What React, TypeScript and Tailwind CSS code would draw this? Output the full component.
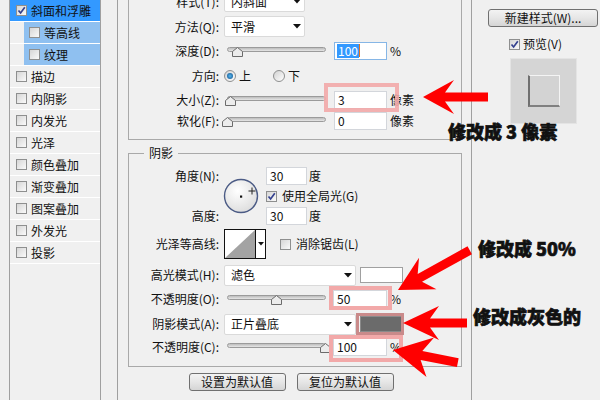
import React from 'react';

// small building blocks of the old Win7-style layer style dialog

const Check = ({ checked = false }: { checked?: boolean }) => (
  <span className="relative inline-flex w-[11px] h-[11px] shrink-0 border border-[#8e8f8f] bg-linear-to-br from-[#d6d6d6] to-[#fafafa]">
    {checked && (
      <svg className="absolute left-0 top-0" width="9" height="9" viewBox="0 0 9 9">
        <path d="M1.5 4.5 L3.6 7 L7.8 1.3" fill="none" stroke="#34418f" strokeWidth="1.7" />
      </svg>
    )}
  </span>
);

const Radio = ({ on = false }: { on?: boolean }) => (
  <span className="inline-flex w-[12px] h-[12px] shrink-0 rounded-full border border-[#8e8f8f] bg-linear-to-br from-[#d2d2d2] to-white items-center justify-center">
    {on && <span className="w-[6px] h-[6px] rounded-full bg-radial from-[#58b8ee] to-[#0c4f8c]" />}
  </span>
);

const Caret = () => (
  <svg width="8" height="5" viewBox="0 0 8 5">
    <path d="M0 0 H8 L4 4.5 Z" fill="#111" />
  </svg>
);

const Select = ({ value, className }: { value: string; className: string }) => (
  <div className={`h-[21px] bg-white border border-[#dadada] rounded-[2px] flex items-center justify-between pl-[6px] pr-[3px] ${className}`}>
    <span>{value}</span>
    <Caret />
  </div>
);

const Field = ({ value, className = 'w-[53px]', focus = false }: { value: string; className?: string; focus?: boolean }) => (
  <div className={`h-[18px] bg-white border flex items-center pl-[2px] ${focus ? 'border-[#86b6e6]' : 'border-[#d3d6db]'} ${className}`}>
    {focus ? (
      <>
        <span className="bg-[#3399ff] text-white leading-[14px] px-[1px]">{value}</span>
        <span className="w-[1px] h-[13px] bg-[#e07020]" />
      </>
    ) : (
      <span className="px-[1px]">{value}</span>
    )}
  </div>
);

const Slider = ({ pos }: { pos: number }) => (
  <div className="relative w-[106px] h-[12px] shrink-0">
    <div className="absolute left-[3px] w-[99px] top-[2px] h-[5px] rounded-full border border-[#9b9b9b] bg-linear-to-b from-[#bdbdbd] to-[#e6e6e6]" />
    <svg className="absolute top-[2px]" style={{ left: 3 + pos - 5.5 }} width="11" height="10" viewBox="0 0 11 10">
      <path d="M5.5 0.5 L10.5 4.5 V9.5 H0.5 V4.5 Z" fill="#ececec" stroke="#6b6b6b" />
    </svg>
  </div>
);

const Row = ({ label, className, children }: { label: string; className: string; children?: React.ReactNode }) => (
  <div className={`flex items-center ${className}`}>
    <div className="w-[90px] shrink-0 text-right">{label}</div>
    <div className="ml-[5px] flex items-center">{children}</div>
  </div>
);

const Button = ({ children, className }: { children: React.ReactNode; className: string }) => (
  <div className={`h-[18px] flex items-center justify-center rounded-[3px] border border-[#707070] bg-linear-to-b from-[#f3f3f3] via-[#e6e6e6] to-[#d5d5d5] ${className}`}>
    {children}
  </div>
);

const sideItems = ['描边', '内阴影', '内发光', '光泽', '颜色叠加', '渐变叠加', '图案叠加', '外发光', '投影'];

const Sidebar = () => (
  <div className="ml-[9px] w-[92px] h-full shrink-0 border-x border-[#a0a0a0] bg-[#f0f0f0]">
    <div className="h-[22px] border-b border-white bg-[#3399ff] flex items-center pl-[6px] gap-[4px]">
      <Check checked />
      <span>斜面和浮雕</span>
    </div>
    {['等高线', '纹理'].map((t) => (
      <div key={t} className="h-[22px] border-b border-white flex">
        <div className="w-[14px]" />
        <div className="flex-1 bg-[#8fc0f0] flex items-center pl-[5px] gap-[4px]">
          <Check />
          <span>{t}</span>
        </div>
      </div>
    ))}
    {sideItems.map((t) => (
      <div key={t} className="h-[22px] border-b border-white flex items-center pl-[6px] gap-[4px]">
        <Check />
        <span>{t}</span>
      </div>
    ))}
  </div>
);

const AngleDial = () => (
  <svg width="36" height="36" viewBox="0 0 36 36">
    <defs>
      <radialGradient id="dial" cx="40%" cy="35%" r="70%">
        <stop offset="0%" stopColor="#ffffff" />
        <stop offset="100%" stopColor="#dcdcdc" />
      </radialGradient>
    </defs>
    <circle cx="18" cy="18" r="16.5" fill="url(#dial)" stroke="#4b5b85" strokeWidth="1.4" />
    <rect x="17" y="17.5" width="2.2" height="2.2" fill="#111" />
    <path d="M29 9.5 V16.5 M25.5 13 H32.5" stroke="#222" strokeWidth="1" />
  </svg>
);

const Contour = () => (
  <div className="w-[42px] h-[30px] border border-[#111] bg-white flex">
    <svg width="30" height="28" viewBox="0 0 30 28">
      <path d="M0 28 L30 0 V28 Z" fill="#a3a3a3" />
    </svg>
    <div className="flex-1 border-l border-[#111] flex items-center justify-center">
      <svg width="6" height="4" viewBox="0 0 6 4">
        <path d="M0 0 H6 L3 3.5 Z" fill="#111" />
      </svg>
    </div>
  </div>
);

const BevelGroup = () => (
  <div className="ml-[10px] w-[334px] border-x border-b border-[#a9a9a9] pb-[8px]">
    <div className="-mt-[11px]">
      <Row label="样式(T):" className="h-[25px]">
        <Select value="内斜面" className="w-[81px]" />
      </Row>
      <Row label="方法(Q):" className="h-[25px]">
        <Select value="平滑" className="w-[81px]" />
      </Row>
      <Row label="深度(D):" className="h-[23px]">
        <Slider pos={10} />
        <Field value="100" focus className="ml-[4px] w-[53px]" />
        <span className="ml-[3px]">%</span>
      </Row>
      <Row label="方向:" className="h-[28px]">
        <Radio on />
        <span className="ml-[3px]">上</span>
        <span className="ml-[22px] flex"><Radio /></span>
        <span className="ml-[3px]">下</span>
      </Row>
      <Row label="大小(Z):" className="h-[20px]">
        <Slider pos={3.5} />
        <Field value="3" className="ml-[4px] w-[53px]" />
        <span className="ml-[3px]">像素</span>
      </Row>
      <Row label="软化(F):" className="h-[21px]">
        <Slider pos={0.7} />
        <Field value="0" className="ml-[4px] w-[53px]" />
        <span className="ml-[3px]">像素</span>
      </Row>
    </div>
  </div>
);

const ShadowGroup = () => (
  <div className="relative ml-[10px] mt-[13px] w-[334px] border border-[#a9a9a9] pt-[12px] pb-[10px]">
    <span className="absolute -top-[9px] left-[15px] px-[5px] bg-[#f0f0f0] leading-[16px]">阴影</span>
    <div className="flex h-[60px]">
      <div className="w-[90px] shrink-0 flex flex-col text-right">
        <div className="h-[20px] leading-[20px]">角度(N):</div>
        <div className="h-[20px]" />
        <div className="h-[20px] leading-[20px]">高度:</div>
      </div>
      <div className="ml-[4px] w-[36px] flex items-center">
        <AngleDial />
      </div>
      <div className="ml-[7px] flex flex-col">
        <div className="h-[20px] flex items-center">
          <Field value="30" className="w-[41px] h-[17px]" />
          <span className="ml-[2px]">度</span>
        </div>
        <div className="h-[20px] flex items-center">
          <Check checked />
          <span className="ml-[5px]">使用全局光(G)</span>
        </div>
        <div className="h-[20px] flex items-center">
          <Field value="30" className="w-[41px] h-[17px]" />
          <span className="ml-[2px]">度</span>
        </div>
      </div>
    </div>
    <Row label="光泽等高线:" className="h-[36px]">
      <Contour />
      <span className="ml-[14px] flex"><Check /></span>
      <span className="ml-[5px]">消除锯齿(L)</span>
    </Row>
    <Row label="高光模式(H):" className="h-[26px]">
      <Select value="滤色" className="w-[132px]" />
      <div className="ml-[4px] w-[43px] h-[16px] bg-white border border-[#a0a0a0]" />
    </Row>
    <Row label="不透明度(O):" className="h-[22px]">
      <Slider pos={49.7} />
      <Field value="50" className="ml-[3px] w-[54px]" />
      <span className="ml-[3px]">%</span>
    </Row>
    <Row label="阴影模式(A):" className="h-[28px]">
      <Select value="正片叠底" className="w-[132px]" />
      <div className="ml-[4px] w-[43px] h-[16px] bg-[#6b6b6b] border border-[#8a8a8a]" />
    </Row>
    <Row label="不透明度(C):" className="h-[18px]">
      <Slider pos={98.3} />
      <Field value="100" className="ml-[3px] w-[54px]" />
      <span className="ml-[3px]">%</span>
    </Row>
  </div>
);

const RightPanel = () => (
  <div className="flex-1 pl-[16px] pt-[9px]">
    <Button className="w-[110px]">新建样式(W)...</Button>
    <div className="mt-[11px] ml-[21px] h-[12px] flex items-center">
      <Check checked />
      <span className="ml-[3px]">预览(V)</span>
    </div>
    <div className="mt-[8px] ml-[22px] w-[67px] h-[66px] border border-[#e4e4e4] bg-[#d5d5d5] flex items-center justify-center">
      <div className="w-[32px] h-[32px] border-l-2 border-b-2 border-t border-r border-l-[#707070] border-b-[#808080] border-t-[#f4f4f4] border-r-[#f4f4f4] bg-[#d3d3d3]" />
    </div>
  </div>
);

// red marker arrows drawn on top of the screenshot
const arrow = (L: number, hl: number, hw: number, t: number) =>
  `0,0 ${hl},${-hw} ${hl - 9},${-t} ${L},${-t} ${L},${t} ${hl - 9},${t} ${hl},${hw}`;

const note = 'absolute text-[18px] leading-[19px] font-black text-[#111] whitespace-nowrap [-webkit-text-stroke:0.7px_#111]';

const Annotations = () => (
  <>
    <div className="absolute left-[324px] top-[83px] w-[75px] h-[29px] border-[4px] border-[#f2a9a9]/90" />
    <div className="absolute left-[329px] top-[286px] w-[63px] h-[24px] border-[4px] border-[#f2a9a9]" />
    <div className="absolute left-[356px] top-[313px] w-[48px] h-[22px] border-[3px] border-[#c98a8a]" />
    <div className="absolute left-[329px] top-[335px] w-[74px] h-[27px] border-[4px] border-[#f2a9a9]" />
    <svg className="absolute left-0 top-0 pointer-events-none" width="600" height="400">
      <polygon transform="translate(423 97)" points={arrow(65, 31, 17, 4.5)} fill="#ff0000" />
      <polygon transform="translate(398 290) rotate(-29)" points={arrow(82, 34, 18, 4.5)} fill="#ff0000" />
      <polygon transform="translate(403 323)" points={arrow(64, 36, 17, 4.5)} fill="#ff0000" />
      <polygon transform="translate(393 350) rotate(11)" points={arrow(66, 38, 20, 4.5)} fill="#ff0000" />
    </svg>
    <div className={`${note} left-[448px] top-[122px]`}>修改成 3 像素</div>
    <div className={`${note} left-[478px] top-[239px]`}>修改成 50%</div>
    <div className={`${note} left-[473px] top-[307px]`}>修改成灰色的</div>
  </>
);

export default function App() {
  return (
    <div className="relative w-[600px] h-[400px] overflow-hidden bg-[#f0f0f0] flex text-[12px] leading-[16px] text-[#111] font-['Noto_Sans_CJK_SC',sans-serif]">
      <Sidebar />
      <div className="ml-[16px] w-px h-full bg-[#a0a0a0] shrink-0" />
      <div className="w-[353px] shrink-0">
        <BevelGroup />
        <ShadowGroup />
        <div className="mt-[6px] flex justify-center gap-[11px] pr-[7px]">
          <Button className="w-[97px]">设置为默认值</Button>
          <Button className="w-[97px]">复位为默认值</Button>
        </div>
      </div>
      <div className="w-px h-full bg-[#a0a0a0] shrink-0" />
      <RightPanel />
      <Annotations />
    </div>
  );
}
